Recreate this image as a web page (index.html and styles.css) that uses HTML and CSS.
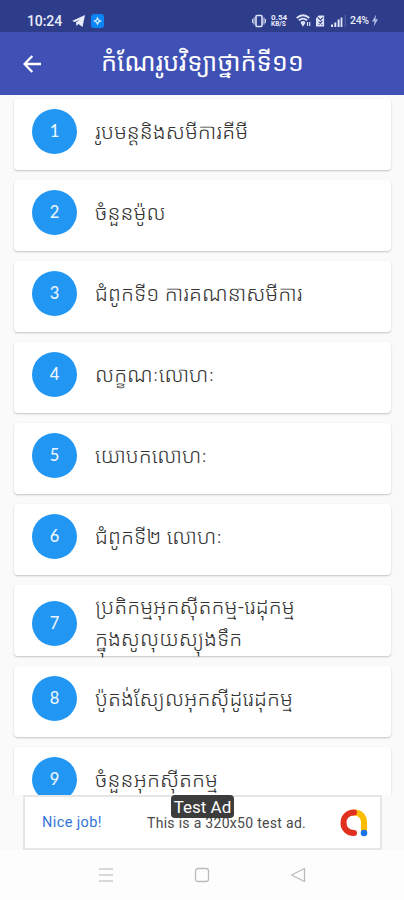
FILE: index.html
```html
<!DOCTYPE html>
<html lang="km">
<head>
    <meta charset="utf-8">
    <title>កំណែរូបវិទ្យាថ្នាក់ទី១១</title>
    <link rel="stylesheet" href="styles.css">
</head>
<body>
    <div class="phone">
        <div class="statusBar">
            <span class="time">10:24</span>
            <svg class="telegram" width="13" height="12" viewBox="0 0 13 12"><path d="M0 6 L13 0 L10.5 12 L6.5 9 L4.5 11 L4 7.5 L8 4.5 L3 7 Z" fill="#e9ecfb"/></svg>
            <svg class="appBadge" width="13" height="14" viewBox="0 0 13 14"><rect width="13" height="14" rx="3" fill="#0b84f5"/><path d="M6.5 2.5 L8 5.5 L11 7 L8 8.5 L6.5 11.5 L5 8.5 L2 7 L5 5.5 Z" fill="#c4e5ff"/><circle cx="6.5" cy="7" r="1" fill="#0b84f5"/></svg>
            <div class="statusIcons">
                <svg class="vibrate" width="14" height="14" viewBox="0 0 14 14" fill="none" stroke="#dfe4fa"><rect x="4" y="1.5" width="6" height="11" rx="1" stroke-width="1.6"/><path d="M2 3.5v7M12 3.5v7M.4 5v4M13.6 5v4"/></svg>
                <span class="speed"><b class="rate">0.54</b><b class="unit">KB/S</b></span>
                <svg class="wifi" width="15" height="13" viewBox="0 0 15 13" fill="none" stroke="#dfe4fa" stroke-width="1.7"><path d="M.7 4 Q7 -1.5 13.3 4M2.8 6.4 Q7 2.8 11.2 6.4M5 8.8 Q7 7 9 8.8"/><path d="M5.8 9.5h2.4L7 11.5zM11.5 8v4M13.7 8v4" stroke-width="1.2"/></svg>
                <svg class="sim" width="9" height="12" viewBox="0 0 10 12"><path d="M3 0h6v12H0V3z" fill="#dfe4fa"/><path d="M2 2l3 3 3-3M3 10l4-4M3 7l4 3" stroke="#2e3d8a" stroke-width="1.2" fill="none"/></svg>
                <svg class="signal" width="15" height="12" viewBox="0 0 15 12" fill="#dfe4fa"><path d="M0 9.5h2V12H0zM3.3 7.5h2V12h-2zM6.6 4.5h2V12h-2zM9.6 2.5h1.8V12H9.6z"/><path d="M13.8 0h.8v12h-.8z" fill="#6573b8"/></svg>
                <span class="battery">24%</span>
                <svg width="6" height="13" viewBox="0 0 6 12"><path d="M4.2 0 L0 7h2.5L1.8 12 L6 4.8H3.4z" fill="#aeb9e8"/></svg>
            </div>
        </div>
        <div class="header">
            <svg class="back" width="18" height="18" viewBox="0 0 18 18" fill="none" stroke="#fff" stroke-width="2.3"><path d="M18 9H2M9.3 1 L1.5 9 L9.3 17"/></svg>
            <h1 class="title">កំណែរូបវិទ្យាថ្នាក់ទី១១</h1>
        </div>
        <div class="list">
            <div class="card"><span class="number">1</span><p class="lesson">រូបមន្តនិងសមីការគីមី</p></div>
            <div class="card"><span class="number">2</span><p class="lesson">ចំនួនម៉ូល</p></div>
            <div class="card"><span class="number">3</span><p class="lesson">ជំពូកទី១ ការគណនាសមីការ</p></div>
            <div class="card"><span class="number">4</span><p class="lesson">លក្ខណៈលោហៈ</p></div>
            <div class="card"><span class="number">5</span><p class="lesson">យោបកលោហៈ</p></div>
            <div class="card"><span class="number">6</span><p class="lesson">ជំពូកទី២ លោហៈ</p></div>
            <div class="card tall"><span class="number">7</span><p class="lesson">ប្រតិកម្មអុកស៊ីតកម្ម-រេដុកម្ម<br>ក្នុងសូលុយស្យុងទឹក</p></div>
            <div class="card"><span class="number">8</span><p class="lesson">ប៉ូតង់ស្យែលអុកស៊ីដូរេដុកម្ម</p></div>
            <div class="card"><span class="number">9</span><p class="lesson">ចំនួនអុកស៊ីតកម្ម</p></div>
        </div>
        <div class="adArea">
            <div class="ad">
                <span class="adTag">Test Ad</span>
                <span class="nice">Nice job!</span>
                <span class="adText">This is a 320x50 test ad.</span>
                <svg class="admob" width="28" height="28" viewBox="0 0 28 28" fill="none" stroke-linecap="round" stroke-width="6"><path d="M14 3.5 C21 3.5 24 8 24 14V23" stroke="#fbbc04"/><path d="M14 3.5 C7.5 3.5 3.5 8 3.5 14 S8 24 14 24" stroke="#e1301e"/><circle cx="24" cy="24" r="3.3" fill="#1a73e8"/></svg>
            </div>
        </div>
        <div class="navBar">
            <svg width="16" height="16" viewBox="0 0 16 16" fill="none" stroke="#ccc" stroke-width="1.3"><path d="M1 2h14M1 8h14M1 14h14"/></svg>
            <svg width="16" height="16" viewBox="0 0 16 16" fill="none" stroke="#bbb" stroke-width="1.3"><rect x="1.5" y="1.5" width="13" height="13" rx="2.5"/></svg>
            <svg width="16" height="16" viewBox="0 0 16 16" fill="none" stroke="#bbb" stroke-width="1.3" stroke-linejoin="round"><path d="M14.5 1.5v13L1.5 8z"/></svg>
        </div>
    </div>
</body>
</html>
```
FILE: styles.css
```css
body{
    margin: 0;
    background-color: #fafafa;
    font-family: "Noto Sans Khmer", "Khmer OS", "DejaVu Sans", Roboto, sans-serif;
}
.phone{
    width: 404px;
    height: 900px;
    display: flex;
    flex-direction: column;
    overflow: hidden;
}
.statusBar{
    height: 32px;
    flex: none;
    box-sizing: border-box;
    padding: 9px 26px 0 27px;
    display: flex;
    align-items: center;
    background-color: #2e3d8a;
    color: #e9ecfb;
    font-family: Roboto, sans-serif;
}
.time{
    font-size: 14px;
    width: 45px;
    letter-spacing: -0.1px;
    font-weight: 500;
}
.appBadge{
    margin-left: 6px;
}
.statusIcons{
    margin-left: auto;
    display: flex;
    align-items: center;
}
.vibrate{
    margin-right: 5px;
}
.speed{
    display: flex;
    flex-direction: column;
    width: 18px;
    margin-right: 7px;
    line-height: 7px;
}
.rate{
    font-size: 8px;
}
.unit{
    font-size: 6.5px;
    line-height: 6px;
}
.wifi{
    margin-right: 5px;
}
.sim{
    margin-right: 6px;
}
.signal{
    margin-right: 4px;
}
.battery{
    font-size: 10.5px;
    font-weight: 500;
    width: 22px;
    letter-spacing: -0.3px;
}
.header{
    height: 63px;
    flex: none;
    display: flex;
    align-items: center;
    box-sizing: border-box;
    padding-left: 23px;
    background-color: #3f51b5;
    color: #fff;
}
.title{
    margin: -6px 0 0 60px;
    font-size: 25.3px;
    font-weight: normal;
    line-height: 40px;
    white-space: nowrap;
}
.list{
    flex: 1;
    min-height: 0;
    overflow: hidden;
    padding: 4px 13px 0 14px;
}
.card{
    height: 71px;
    margin-bottom: 10px;
    box-sizing: border-box;
    padding: 10px 18px;
    display: flex;
    align-items: flex-start;
    background-color: #fff;
    border-radius: 4px;
    box-shadow: 0 1px 2px rgba(0,0,0,0.22);
}
.number{
    width: 45px;
    height: 45px;
    flex: none;
    border-radius: 50%;
    background-color: #2196f3;
    color: #eaf5ff;
    font-family: Lato, sans-serif;
    font-size: 16.5px;
    font-weight: 500;
    line-height: 45px;
    text-align: center;
}
.lesson{
    margin: -1px 0 0 18px;
    font-size: 21.1px;
    font-weight: 300;
    line-height: 45px;
    color: #333;
    white-space: nowrap;
}
.tall{
    padding-top: 16px;
}
.tall .lesson{
    margin-top: -11px;
    line-height: 32px;
}
.adArea{
    height: 55px;
    flex: none;
    padding: 0 22px 0 23px;
}
.ad{
    position: relative;
    height: 55px;
    box-sizing: border-box;
    border: 2px solid #e6e6e6;
    background-color: #fff;
    display: flex;
    align-items: center;
    padding: 0 12px 0 17px;
    font-family: Roboto, sans-serif;
}
.adTag{
    position: absolute;
    left: 146px;
    top: -2px;
    width: 63px;
    height: 23px;
    border-radius: 4px;
    background-color: #3c3c3c;
    color: #fff;
    font-size: 17px;
    line-height: 24px;
    text-align: center;
}
.nice{
    width: 105px;
    color: #3274d8;
    font-size: 14.5px;
    letter-spacing: 0.4px;
}
.adText{
    color: #4a4a4a;
    font-size: 14px;
    letter-spacing: 0.3px;
    white-space: nowrap;
}
.admob{
    margin-left: auto;
}
.navBar{
    height: 50px;
    flex: none;
    display: flex;
    align-items: center;
    gap: 80px;
    padding-left: 98px;
    background-color: #fdfdfd;
}
```
